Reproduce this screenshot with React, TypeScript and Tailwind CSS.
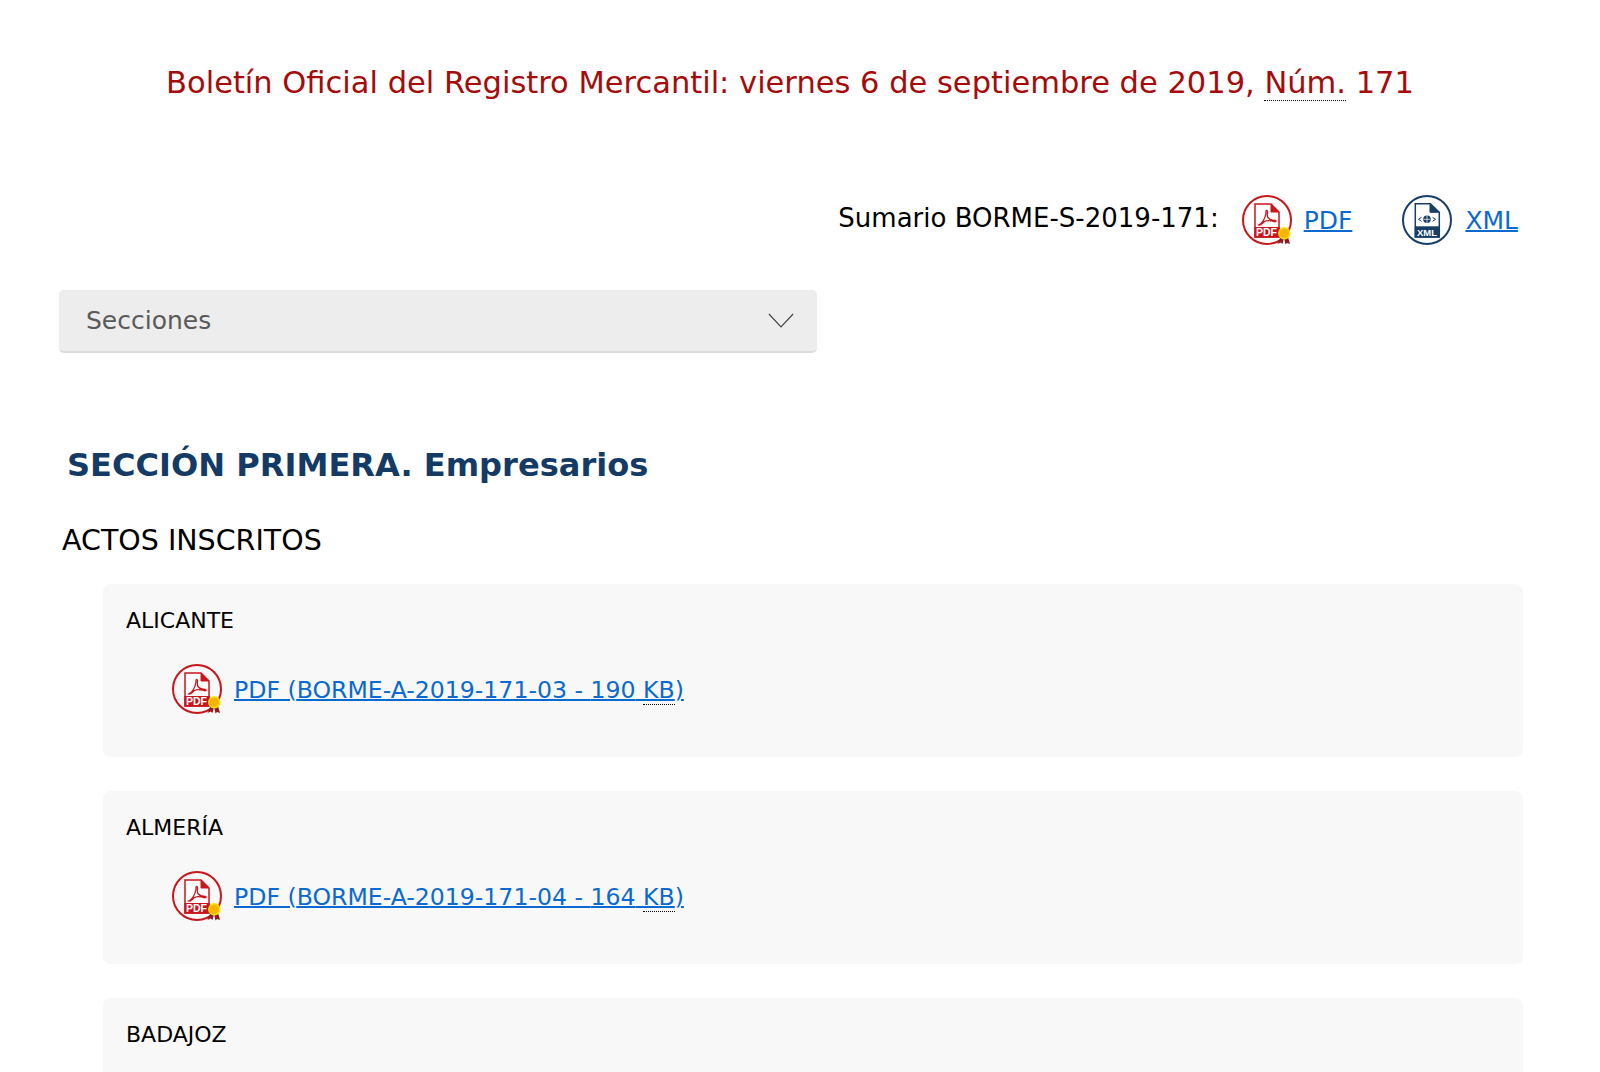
const FONT = "font-['DejaVu_Sans',sans-serif]";

function PdfIcon() {
    return (
        <svg viewBox="0 0 50 50" className="w-[50px] h-[50px] shrink-0">
            <circle cx="25" cy="25" r="24" fill="none" stroke="#c8161d" strokeWidth="2" />
            <path d="M13 42V9h16l8 8v25z" fill="#fff" stroke="#c8161d" strokeWidth="1.5" />
            <path d="M29 9v8h8z" fill="#c8161d" stroke="#c8161d" strokeWidth="1" />
            <path
                d="M16.500 30c3.500-1.500 6.500-6 7.500-12-.5-2.500 1-3.500 1.500-1.500.3 2-1 4 .5 6 1.500 2 3.500 3 7.500 3 1.500.5 0 2-2 1-3-1-6-1.500-9 0-2 1.500-4 4.500-6 3.500z"
                fill="none"
                stroke="#c8161d"
                strokeWidth="1.300"
            />
            <rect x="12.300" y="32" width="25.400" height="10.700" fill="#c8161d" />
            <text x="14" y="41" fontSize="10.500" fontWeight="700" fill="#fff" fontFamily="'Liberation Sans',sans-serif">
                PDF
            </text>
            <path d="M38.500 42l-3 7 3.200-1.500L40.500 49l1.500-6zM46 42l2 7-3-1-1.500 1.500L42 43z" fill="#8e1b20" />
            <circle cx="42.300" cy="38.300" r="5.500" fill="#f5b400" stroke="#f9e400" strokeWidth="1.500" />
        </svg>
    );
}

function XmlIcon() {
    return (
        <svg viewBox="0 0 50 50" className="w-[50px] h-[50px] shrink-0">
            <circle cx="25" cy="25" r="24" fill="none" stroke="#173f66" strokeWidth="2" />
            <path d="M13.300 42V8.800h15l9 8.500V42z" fill="#fff" stroke="#173f66" strokeWidth="1.500" />
            <path d="M28 8.800v8.500h9.300z" fill="#173f66" stroke="#173f66" strokeWidth="1" />
            <circle cx="25" cy="24.300" r="3.800" fill="#173f66" />
            <path d="M21.500 24.300h7M25 20.500v7.500" stroke="#fff" strokeWidth=".7" />
            <path d="M19.500 22.300l-3 2 3 2M30.500 22.300l3 2-3 2" fill="none" stroke="#173f66" strokeWidth="1" />
            <rect x="12.700" y="31.300" width="25" height="11.400" fill="#173f66" />
            <text x="15" y="40.500" fontSize="9.500" fontWeight="700" fill="#fff" fontFamily="'Liberation Sans',sans-serif">
                XML
            </text>
        </svg>
    );
}

function Abbr({ children }: { children: React.ReactNode }) {
    return <span className="border-b border-dotted border-black">{children}</span>;
}

const provinces = [
    { name: 'ALICANTE', ref: 'BORME-A-2019-171-03', size: '190' },
    { name: 'ALMERÍA', ref: 'BORME-A-2019-171-04', size: '164' },
];

export default function App() {
    return (
        <div className={`${FONT} h-[1072px] overflow-hidden bg-white text-black pt-[62px]`}>
            <h2 className="pr-[20px] text-center text-[30.500px] leading-[42px] text-[#a50b0b] font-normal">
                Boletín Oficial del Registro Mercantil: viernes 6 de septiembre de 2019, <Abbr>Núm.</Abbr> 171
            </h2>

            <div className="mt-[91px] flex items-center justify-end pr-[82px] h-[50px]">
                <span className="text-[26px] mr-[23px] -mt-[4px]">Sumario BORME-S-2019-171:</span>
                <PdfIcon />
                <a className="ml-[12px] mt-[2px] text-[25px] text-[#0a6ad0] underline decoration-2">PDF</a>
                <span className="ml-[50px]"><XmlIcon /></span>
                <a className="ml-[13px] mt-[2px] text-[25px] text-[#0a6ad0] underline decoration-2">XML</a>
            </div>

            <div className="ml-[59px] mt-[45px] w-[758px] h-[63px] flex items-center justify-between rounded-[5px] bg-[#ededed] border-b-2 border-[#dcdcdc] pl-[27px] pr-[23px]">
                <span className="text-[25px] text-[#5a5a5a]">Secciones</span>
                <svg viewBox="0 0 28 16" className="w-[26px] h-[15px]">
                    <path d="M1 1l13 14L27 1" fill="none" stroke="#444" strokeWidth="1.200" />
                </svg>
            </div>

            <h3 className="ml-[67px] mt-[88px] text-[32.100px] leading-[48px] font-bold text-[#143a66]">
                SECCIÓN PRIMERA. Empresarios
            </h3>
            <h4 className="ml-[62px] mt-[32px] text-[28.500px] leading-[40px] font-normal">ACTOS INSCRITOS</h4>

            <div className="mt-[23px] ml-[103px] mr-[77px] flex flex-col gap-[34px]">
                {provinces.map((p) => (
                    <div key={p.name} className="h-[173px] rounded-[8px] bg-[#f8f8f8] pl-[23px] pt-[22px]">
                        <p className="text-[22px] leading-[30px]">{p.name}</p>
                        <div className="mt-[28px] ml-[46px] flex items-center gap-[12px]">
                            <PdfIcon />
                            <a className="mt-[3px] text-[23.600px] text-[#0a6ad0] underline decoration-2">
                                PDF ({p.ref} - {p.size} <Abbr>KB</Abbr>)
                            </a>
                        </div>
                    </div>
                ))}
                <div className="h-[173px] rounded-[8px] bg-[#f8f8f8] pl-[23px] pt-[22px]">
                    <p className="text-[22px] leading-[30px]">BADAJOZ</p>
                </div>
            </div>
        </div>
    );
}
